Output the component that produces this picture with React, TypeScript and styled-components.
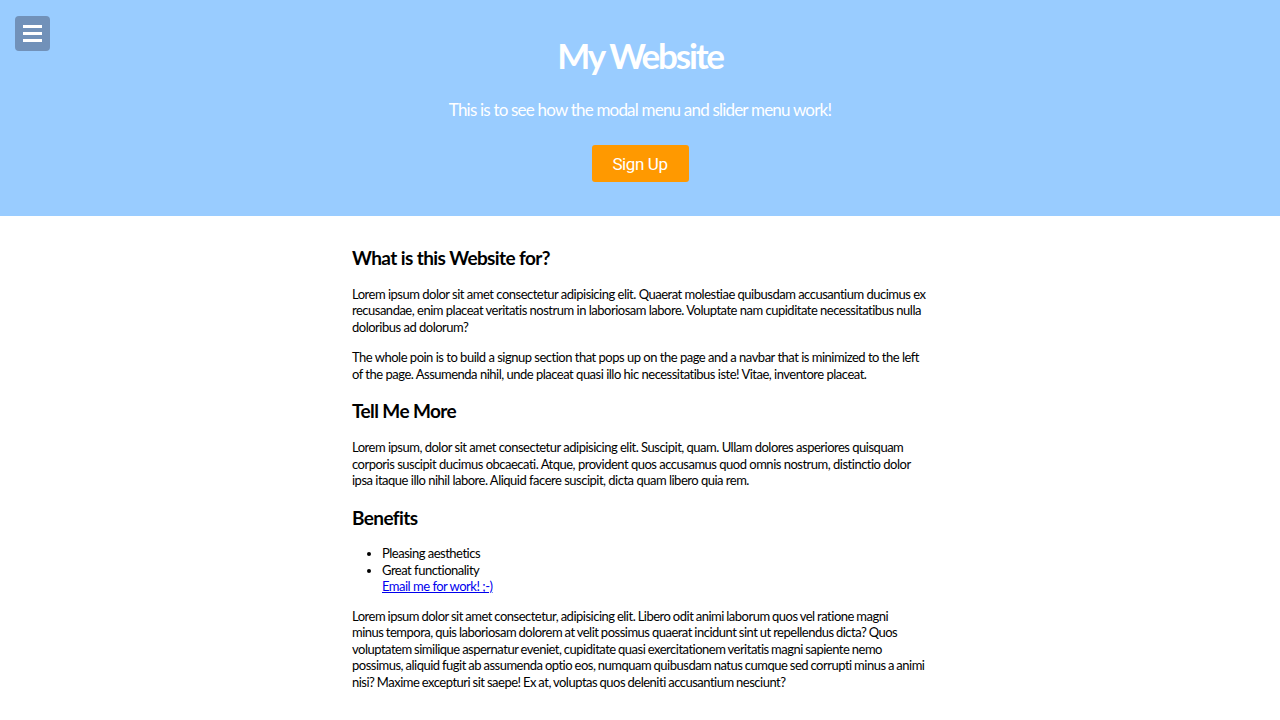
import styled, { createGlobalStyle } from 'styled-components'

const GlobalStyle = createGlobalStyle`
    body {
        margin : 0;
        font-family : Lato, "Open Sans", sans-serif;
        background : #fff;
        color : #000;
    }
`

const MenuIcon = () => (
    <svg width="19" height="17" viewBox="0 0 19 17">
        <rect x="0" y="0" width="19" height="3" fill="#fff" />
        <rect x="0" y="7" width="19" height="3" fill="#fff" />
        <rect x="0" y="14" width="19" height="3" fill="#fff" />
    </svg>
)

export default function App() {
    return (
        <>
            <GlobalStyle />
            <Hero>
                <MenuButton aria-label="menu">
                    <MenuIcon />
                </MenuButton>
                <Title>My Website</Title>
                <Subtitle>This is to see how the modal menu and slider menu work!</Subtitle>
                <SignUp>Sign Up</SignUp>
            </Hero>

            <Content>
                <Heading>What is this Website for?</Heading>
                <Text>
                    Lorem ipsum dolor sit amet consectetur adipisicing elit. Quaerat molestiae quibusdam accusantium ducimus ex
                    recusandae, enim placeat veritatis nostrum in laboriosam labore. Voluptate nam cupiditate necessitatibus nulla
                    doloribus ad dolorum?
                </Text>
                <Text>
                    The whole poin is to build a signup section that pops up on the page and a navbar that is minimized to the left of
                    the page. Assumenda nihil, unde placeat quasi illo hic necessitatibus iste! Vitae, inventore placeat.
                </Text>

                <Heading>Tell Me More</Heading>
                <Text>
                    Lorem ipsum, dolor sit amet consectetur adipisicing elit. Suscipit, quam. Ullam dolores asperiores quisquam
                    corporis suscipit ducimus obcaecati. Atque, provident quos accusamus quod omnis nostrum, distinctio dolor
                    ipsa itaque illo nihil labore. Aliquid facere suscipit, dicta quam libero quia rem.
                </Text>

                <Heading>Benefits</Heading>
                <List>
                    <Item>Pleasing aesthetics</Item>
                    <Item>Great functionality</Item>
                    <Item $plain>
                        <MailLink href="#">Email me for work! ;-)</MailLink>
                    </Item>
                </List>
                <Text $tight>
                    Lorem ipsum dolor sit amet consectetur, adipisicing elit. Libero odit animi laborum quos vel ratione magni<br />
                    minus tempora, quis laboriosam dolorem at velit possimus quaerat incidunt sint ut repellendus dicta? Quos
                    voluptatem similique aspernatur eveniet, cupiditate quasi exercitationem veritatis magni sapiente nemo
                    possimus, aliquid fugit ab assumenda optio eos, numquam quibusdam natus cumque sed corrupti minus a animi
                    nisi? Maxime excepturi sit saepe! Ex at, voluptas quos deleniti accusantium nesciunt?
                </Text>
            </Content>
        </>
    )
}

// styled-component
const Hero = styled.header`
    position : relative;
    height : 216px;
    box-sizing : border-box;
    background : #99ccff;
    display : flex;
    flex-direction : column;
    align-items : center;
    padding-top : 34px;
    color : #fff;
`

const MenuButton = styled.button`
    position : absolute;
    top : 16px;
    left : 15px;
    width : 35px;
    height : 35px;
    border : none;
    border-radius : 4px;
    background : #7191b9;
    display : flex;
    align-items : center;
    justify-content : center;
    padding : 0;
    cursor : pointer;
`

const Title = styled.h1`
    margin : 0;
    font-size : 35px;
    font-weight : 700;
    line-height : 1.2;
    letter-spacing : -2.2px;
`

const Subtitle = styled.p`
    margin : 24px 0 0;
    font-size : 17px;
    line-height : 1.2;
    letter-spacing : -0.8px;
`

const SignUp = styled.button`
    margin-top : 25px;
    width : 97px;
    height : 37px;
    border : none;
    border-radius : 3px;
    background : #ff9900;
    color : #fff;
    font-family : Roboto, "Liberation Sans", sans-serif;
    font-size : 17px;
    letter-spacing : -0.4px;
    cursor : pointer;
`

const Content = styled.main`
    width : 45%;
    margin : 0 auto;
    padding : 13px 0 20px;
    font-size : 13px;
    letter-spacing : -0.5px;
`

const Heading = styled.h2`
    margin : 18px 0 16px;
    font-size : 19px;
    font-weight : 700;
    line-height : 1.2;
    letter-spacing : -0.6px;
`

const Text = styled.p<{ $tight? : boolean }>`
    margin : 0 0 14px;
    line-height : 16.5px;
    word-spacing : ${p => (p.$tight ? '-0.4px' : 'normal')};
`

const List = styled.ul`
    margin : 0 0 13px;
    padding-left : 30px;
    line-height : 16.5px;
`

const Item = styled.li<{ $plain? : boolean }>`
    list-style : ${p => (p.$plain ? 'none' : 'disc')};
`

const MailLink = styled.a`
    color : #0000ee;
`
